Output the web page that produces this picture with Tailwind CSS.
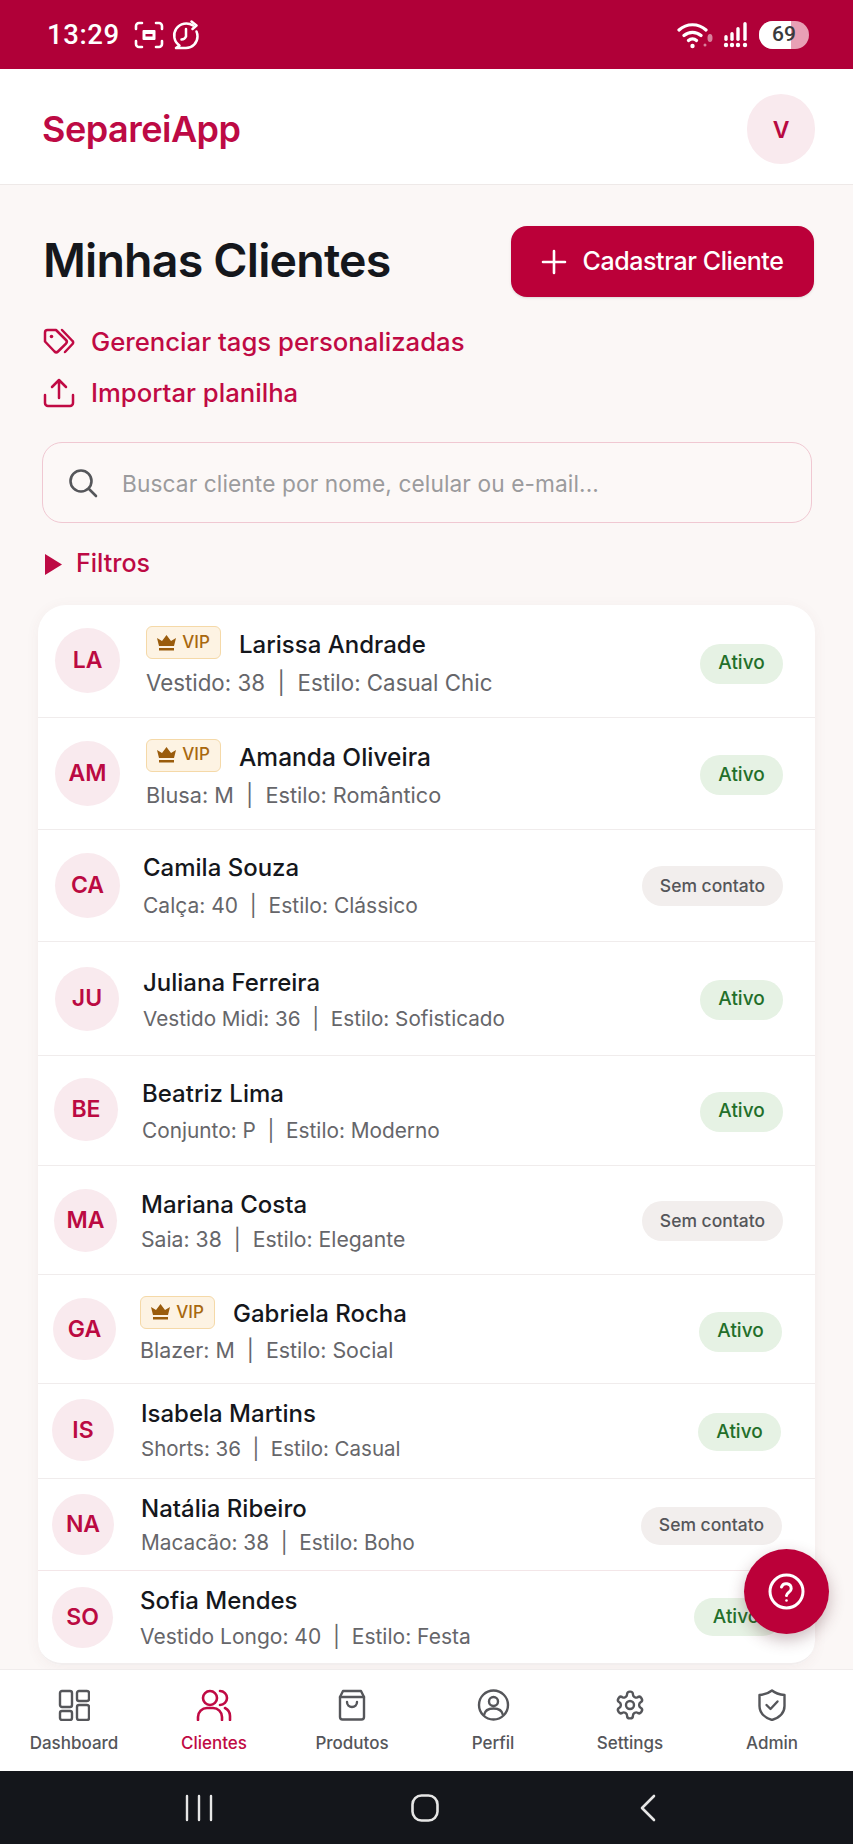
<!DOCTYPE html>
<html lang="pt-BR">
<head>
<meta charset="utf-8">
<script src="https://cdn.jsdelivr.net/npm/@tailwindcss/browser@4"></script>
</head>
<body class="m-0 bg-[#fbf7f6] font-['Inter',sans-serif]">
<div class="relative w-[853px] h-[1844px] overflow-hidden flex flex-col">
  <!-- status bar -->
  <div class="h-[69px] shrink-0 bg-[#b00038] flex items-center justify-between pl-[47px] pr-[44px] text-white">
    <div class="flex items-center">
      <span class="text-[27.5px] font-medium font-['Roboto',sans-serif] w-[86px] tracking-[0.6px]">13:29</span>
      <svg class="ml-[1px]" width="30" height="28" viewBox="0 0 30 28" fill="none" stroke="white" stroke-width="2.6" stroke-linecap="round" stroke-linejoin="round"><path d="M2 8V5a3 3 0 0 1 3-3h3M22 2h3a3 3 0 0 1 3 3v3M28 20v3a3 3 0 0 1-3 3h-3M8 26H5a3 3 0 0 1-3-3v-3"/><rect x="8.500" y="9" width="13" height="10" rx="1" fill="white" stroke="none"/><rect x="11.500" y="13" width="7" height="2.500" fill="#b00038" stroke="none"/></svg>
      <svg class="ml-[7px]" width="30" height="30" viewBox="0 0 30 30" fill="none" stroke="white" stroke-width="2.5" stroke-linecap="round" stroke-linejoin="round"><path d="M22 5.500A11.500 11.500 0 1 0 8.500 25.500L5 28h10a11.500 11.500 0 0 0 11.500-11.500 11.500 11.500 0 0 0-1-5"/><path d="M20.500 1.500l5 4-4 3.500"/><path d="M15 9v7.500a5 5 0 0 1-4.500 3"/></svg>
    </div>
    <div class="flex items-center">
      <svg class="mr-[3px]" width="38" height="28" viewBox="0 0 38 28" fill="none" stroke="white" stroke-width="3.200" stroke-linecap="round"><path d="M2 9a20 20 0 0 1 27 0M7 14.500a13 13 0 0 1 17 0M11.500 19.500a6 6 0 0 1 8 0"/><circle cx="15.500" cy="25" r="2.200" fill="white" stroke="none"/><circle cx="28" cy="24" r="1.500" fill="white" fill-opacity=".5" stroke="none"/><ellipse cx="33" cy="17" rx="2.500" ry="4" fill="white" fill-opacity=".5" stroke="none"/></svg>
      <svg class="ml-[4px]" width="28" height="28" viewBox="0 0 26 28" fill="white"><circle cx="3" cy="24" r="2.200"/><circle cx="9" cy="24" r="2.200"/><circle cx="15" cy="24" r="2.200"/><circle cx="22" cy="24" r="2.200"/><rect x="1.300" y="14" width="3.400" height="6" rx="1.700"/><rect x="7.300" y="11" width="3.400" height="9" rx="1.700"/><rect x="13.300" y="6" width="3.400" height="14" rx="1.700"/><rect x="20.300" y="1" width="3.400" height="19" rx="1.700"/></svg>
      <div class="ml-[9px] w-[50px] h-[28px] rounded-full bg-[#e8a0b5] overflow-hidden relative flex items-center justify-center">
        <div class="absolute inset-y-0 left-0 w-[32px] bg-white"></div>
        <span class="relative text-[21px] font-medium font-['Roboto',sans-serif] text-[#3a3a3c]">69</span>
      </div>
    </div>
  </div>

  <!-- header -->
  <header class="h-[116px] shrink-0 bg-white border-b border-[#eee9e8] flex items-center justify-between pl-[42px] pr-[38px] pt-[4px]">
    <span class="text-[36px] font-semibold text-[#bd0a44] tracking-[-0.5px]">SepareiApp</span>
    <div class="w-[68px] h-[70px] rounded-full bg-[#f9eaee] flex items-center justify-center text-[23px] font-semibold text-[#b80a42] pt-[3px]">V</div>
  </header>

  <!-- content -->
  <main class="flex-1 min-h-0 relative">
    <div class="flex items-center justify-between pl-[43px] pr-[39px] pt-[41px]">
      <h1 class="text-[46.5px] leading-[69px] font-semibold text-[#15171c] tracking-[-0.8px] mb-[2px]">Minhas Clientes</h1>
      <button class="w-[303px] h-[71px] rounded-[16px] bg-[#bb0039] text-white flex items-center justify-center gap-[15px] text-[25px] font-medium tracking-[-0.4px] shadow-sm">
        <svg width="26" height="26" viewBox="0 0 26 26" fill="none" stroke="white" stroke-width="2.600" stroke-linecap="round"><path d="M13 2v22M2 13h22"/></svg>
        Cadastrar Cliente
      </button>
    </div>

    <div class="pl-[43px] mt-[30px] flex flex-col gap-[21px] text-[#c00a44] text-[25.7px] font-medium">
      <div class="flex items-center gap-[16px] h-[30px]">
        <svg width="32" height="28" viewBox="0 0 32 28" fill="none" stroke="#c00a44" stroke-width="2.500" stroke-linecap="round" stroke-linejoin="round"><path d="M2 4.500A2.500 2.500 0 0 1 4.500 2h8.500l10 10a2.500 2.500 0 0 1 0 3.500l-8 8a2.500 2.500 0 0 1-3.500 0L2 13.500z"/><path d="M19 2l10.500 11a2 2 0 0 1 0 3L22 24"/><circle cx="8.500" cy="8.500" r="1.800" fill="#c00a44" stroke="none"/></svg>
        <span>Gerenciar tags personalizadas</span>
      </div>
      <div class="flex items-center gap-[16px] h-[30px]">
        <svg width="32" height="30" viewBox="0 0 32 30" fill="none" stroke="#c00a44" stroke-width="2.500" stroke-linecap="round" stroke-linejoin="round"><path d="M2 17v8a3 3 0 0 0 3 3h22a3 3 0 0 0 3-3v-8"/><path d="M16 20V2M9 9l7-7 7 7"/></svg>
        <span>Importar planilha</span>
      </div>
    </div>

    <div class="ml-[42px] mt-[34px] w-[770px] h-[81px] rounded-[20px] border-[1.5px] border-[#f0c8d2] bg-[#fcf8f7] flex items-center pl-[25px]">
      <svg width="30" height="30" viewBox="0 0 30 30" fill="none" stroke="#55565a" stroke-width="2.600" stroke-linecap="round"><circle cx="13" cy="13" r="10.500"/><path d="M21 21l7 7"/></svg>
      <span class="ml-[24px] text-[22.7px] text-[#9b9b9d] tracking-[0.1px] pt-[4px]">Buscar cliente por nome, celular ou e-mail...</span>
    </div>

    <div class="pl-[45px] mt-[26px] h-[30px] flex items-center gap-[14px] text-[25px] font-medium text-[#bd0a44]">
      <svg width="17" height="21" viewBox="0 0 17 21"><path d="M0 0l17 10.500L0 21z" fill="#bd0a44"/></svg>
      <span>Filtros</span>
    </div>

    <!-- list -->
    <section class="ml-[38px] mt-[26px] w-[777px] rounded-t-[28px] rounded-b-[24px] bg-white shadow-[0_2px_14px_rgba(120,60,70,0.06)]">
      <div class="h-[113px] flex items-center pl-[17px] pr-[32px] border-b border-[#f0ecec]">
        <div class="w-[65px] h-[65px] mb-[2px] rounded-full bg-[#f9eaee] flex items-center justify-center text-[23px] font-semibold text-[#bb0a42] shrink-0">LA</div>
        <div class="ml-[26px] flex-1 min-w-0 pt-[5px]">
          <div class="flex items-center gap-[18px] h-[34px]">
            <span class="w-[75px] h-[33px] mb-[4px] rounded-[6px] border-[1.5px] border-[#f5d9a8] bg-[#fdf3e3] flex items-center justify-center gap-[6px] text-[17px] font-medium text-[#a8680f]"><svg width="19" height="16" viewBox="0 0 19 16" fill="#9a5c0c"><path d="M2 11L0 3l5 3 4.500-6L14 6l5-3-2 8z"/><rect x="2" y="13" width="15" height="2.500"/></svg>VIP</span>
            <span class="text-[24px] font-medium text-[#15171c]">Larissa Andrade</span>
          </div>
          <div class="mt-[4px] text-[22.3px] text-[#66666a] whitespace-pre">Vestido: 38  |  Estilo: Casual Chic</div>
        </div>
        <span class="mt-[5px] w-[83px] h-[40px] rounded-full bg-[#e6f2e4] flex items-center justify-center text-[19px] font-medium text-[#236f2a]">Ativo</span>
      </div>
      <div class="h-[112px] flex items-center pl-[17px] pr-[32px] border-b border-[#f0ecec]">
        <div class="w-[65px] h-[65px] rounded-full bg-[#f9eaee] flex items-center justify-center text-[23px] font-semibold text-[#bb0a42] shrink-0">AM</div>
        <div class="ml-[26px] flex-1 min-w-0 pt-[5px]">
          <div class="flex items-center gap-[18px] h-[34px]">
            <span class="w-[75px] h-[33px] mb-[4px] rounded-[6px] border-[1.5px] border-[#f5d9a8] bg-[#fdf3e3] flex items-center justify-center gap-[6px] text-[17px] font-medium text-[#a8680f]"><svg width="19" height="16" viewBox="0 0 19 16" fill="#9a5c0c"><path d="M2 11L0 3l5 3 4.500-6L14 6l5-3-2 8z"/><rect x="2" y="13" width="15" height="2.500"/></svg>VIP</span>
            <span class="text-[24.5px] font-medium text-[#15171c]">Amanda Oliveira</span>
          </div>
          <div class="mt-[5px] text-[21.7px] text-[#66666a] whitespace-pre">Blusa: M  |  Estilo: Romântico</div>
        </div>
        <span class="mt-[3px] w-[83px] h-[40px] rounded-full bg-[#e6f2e4] flex items-center justify-center text-[19px] font-medium text-[#236f2a]">Ativo</span>
      </div>
      <div class="h-[112px] flex items-center pl-[17px] pr-[32px] border-b border-[#f0ecec]">
        <div class="w-[65px] h-[65px] rounded-full bg-[#f9eaee] flex items-center justify-center text-[23px] font-semibold text-[#bb0a42] shrink-0">CA</div>
        <div class="ml-[23px] flex-1 min-w-0 pt-[2px]">
          <div class="text-[24px] font-medium text-[#15171c] h-[34px] leading-[34px]">Camila Souza</div>
          <div class="mt-[5px] text-[21px] text-[#66666a] whitespace-pre">Calça: 40  |  Estilo: Clássico</div>
        </div>
        <span class="mt-[1px] w-[141px] h-[40px] rounded-full bg-[#f2eeed] flex items-center justify-center text-[17.5px] font-medium text-[#55565a]">Sem contato</span>
      </div>
      <div class="h-[114px] flex items-center pl-[17px] pr-[32px] border-b border-[#f0ecec]">
        <div class="w-[64px] h-[64px] rounded-full bg-[#f9eaee] flex items-center justify-center text-[23px] font-semibold text-[#bb0a42] shrink-0">JU</div>
        <div class="ml-[24px] flex-1 min-w-0 pt-[4px]">
          <div class="text-[24px] font-medium text-[#15171c] h-[34px] leading-[34px]">Juliana Ferreira</div>
          <div class="mt-[3px] text-[20.7px] text-[#66666a] whitespace-pre">Vestido Midi: 36  |  Estilo: Sofisticado</div>
        </div>
        <span class="mt-[2px] w-[83px] h-[40px] rounded-full bg-[#e6f2e4] flex items-center justify-center text-[19px] font-medium text-[#236f2a]">Ativo</span>
      </div>
      <div class="h-[110px] flex items-center pl-[16px] pr-[32px] border-b border-[#f0ecec]">
        <div class="w-[64px] h-[63px] mb-[2px] rounded-full bg-[#f9eaee] flex items-center justify-center text-[23px] font-semibold text-[#bb0a42] shrink-0">BE</div>
        <div class="ml-[24px] flex-1 min-w-0 pt-[3px]">
          <div class="text-[24px] font-medium text-[#15171c] h-[34px] leading-[34px]">Beatriz Lima</div>
          <div class="mt-[4px] text-[20.8px] text-[#66666a] whitespace-pre">Conjunto: P  |  Estilo: Moderno</div>
        </div>
        <span class="mt-[2px] w-[83px] h-[40px] rounded-full bg-[#e6f2e4] flex items-center justify-center text-[19px] font-medium text-[#236f2a]">Ativo</span>
      </div>
      <div class="h-[109px] flex items-center pl-[16px] pr-[32px] border-b border-[#f0ecec]">
        <div class="w-[63px] h-[63px] rounded-full bg-[#f9eaee] flex items-center justify-center text-[23px] font-semibold text-[#bb0a42] shrink-0">MA</div>
        <div class="ml-[24px] flex-1 min-w-0 pt-[4px]">
          <div class="text-[24px] font-medium text-[#15171c] h-[34px] leading-[34px]">Mariana Costa</div>
          <div class="mt-[2px] text-[21.2px] text-[#66666a] whitespace-pre">Saia: 38  |  Estilo: Elegante</div>
        </div>
        <span class="mt-[2px] w-[141px] h-[40px] rounded-full bg-[#f2eeed] flex items-center justify-center text-[17.5px] font-medium text-[#55565a]">Sem contato</span>
      </div>
      <div class="h-[109px] flex items-center pl-[15px] pr-[33px] border-b border-[#f0ecec]">
        <div class="w-[63px] h-[62px] rounded-full bg-[#f9eaee] flex items-center justify-center text-[23px] font-semibold text-[#bb0a42] shrink-0">GA</div>
        <div class="ml-[24px] flex-1 min-w-0 pt-[6px]">
          <div class="flex items-center gap-[18px] h-[34px]">
            <span class="w-[75px] h-[33px] mb-[4px] rounded-[6px] border-[1.5px] border-[#f5d9a8] bg-[#fdf3e3] flex items-center justify-center gap-[6px] text-[17px] font-medium text-[#a8680f]"><svg width="19" height="16" viewBox="0 0 19 16" fill="#9a5c0c"><path d="M2 11L0 3l5 3 4.500-6L14 6l5-3-2 8z"/><rect x="2" y="13" width="15" height="2.500"/></svg>VIP</span>
            <span class="text-[24px] font-medium text-[#15171c]">Gabriela Rocha</span>
          </div>
          <div class="mt-[3px] text-[21.4px] text-[#66666a] whitespace-pre">Blazer: M  |  Estilo: Social</div>
        </div>
        <span class="mt-[5px] w-[83px] h-[40px] rounded-full bg-[#e6f2e4] flex items-center justify-center text-[19px] font-medium text-[#236f2a]">Ativo</span>
      </div>
      <div class="h-[95px] flex items-center pl-[14px] pr-[34px] border-b border-[#f0ecec]">
        <div class="w-[62px] h-[62px] mb-[2px] rounded-full bg-[#f9eaee] flex items-center justify-center text-[23px] font-semibold text-[#bb0a42] shrink-0">IS</div>
        <div class="ml-[27px] flex-1 min-w-0">
          <div class="text-[24px] font-medium text-[#15171c] h-[32px] leading-[32px]">Isabela Martins</div>
          <div class="mt-[4px] text-[20.5px] text-[#66666a] whitespace-pre">Shorts: 36  |  Estilo: Casual</div>
        </div>
        <span class="mt-[2px] w-[83px] h-[38px] rounded-full bg-[#e6f2e4] flex items-center justify-center text-[19px] font-medium text-[#236f2a]">Ativo</span>
      </div>
      <div class="h-[92px] flex items-center pl-[14px] pr-[33px] border-b border-[#f3e6e8]">
        <div class="w-[62px] h-[61px] rounded-full bg-[#f9eaee] flex items-center justify-center text-[23px] font-semibold text-[#bb0a42] shrink-0">NA</div>
        <div class="ml-[27px] flex-1 min-w-0 pt-[3px]">
          <div class="text-[24px] font-medium text-[#15171c] h-[32px] leading-[32px]">Natália Ribeiro</div>
          <div class="mt-[2px] text-[20.8px] text-[#66666a] whitespace-pre">Macacão: 38  |  Estilo: Boho</div>
        </div>
        <span class="mt-[2px] w-[141px] h-[38px] rounded-full bg-[#f2eeed] flex items-center justify-center text-[17.5px] font-medium text-[#55565a]">Sem contato</span>
      </div>
      <div class="h-[94px] flex items-center pl-[14px] pr-[34px] rounded-b-[24px] border-b-2 border-[#f2eeee]">
        <div class="w-[61px] h-[61px] rounded-full bg-[#f9eaee] flex items-center justify-center text-[23px] font-semibold text-[#bb0a42] shrink-0">SO</div>
        <div class="ml-[27px] flex-1 min-w-0 pt-[3px]">
          <div class="text-[24px] font-medium text-[#15171c] h-[32px] leading-[32px]">Sofia Mendes</div>
          <div class="mt-[4px] text-[21px] text-[#66666a] whitespace-pre">Vestido Longo: 40  |  Estilo: Festa</div>
        </div>
        <span class="w-[88px] mr-[-1px] h-[38px] rounded-full bg-[#e6f2e4] flex items-center justify-center text-[19px] font-medium text-[#236f2a] pr-[4px]">Ativo</span>
      </div>
    </section>
  </main>

  <!-- bottom nav -->
  <nav class="h-[102px] shrink-0 bg-white border-t border-[#f0ecec] flex text-[17px] font-medium text-[#55565a] relative">
    <div class="w-[148px] flex flex-col items-center pt-[19px] gap-[10px]">
      <svg width="32" height="32" viewBox="0 0 32 32" fill="none" stroke="#55565a" stroke-width="2.400" stroke-linejoin="round"><rect x="2" y="2" width="12" height="16" rx="2"/><rect x="19" y="2" width="12" height="10" rx="2"/><rect x="2" y="22" width="12" height="9" rx="2"/><rect x="19" y="16" width="12" height="15" rx="2"/></svg>
      <span>Dashboard</span>
    </div>
    <div class="w-[132px] flex flex-col items-center pt-[19px] gap-[10px] text-[#c00a44]">
      <svg width="36" height="32" viewBox="0 0 36 32" fill="none" stroke="#c00a44" stroke-width="2.600" stroke-linecap="round"><circle cx="14" cy="9" r="7"/><path d="M2 31v-3a9 9 0 0 1 9-9h6a9 9 0 0 1 9 9v3"/><path d="M24 2a7 7 0 0 1 0 14M29 19a9 9 0 0 1 5 8v4"/></svg>
      <span>Clientes</span>
    </div>
    <div class="w-[144px] flex flex-col items-center pt-[19px] gap-[10px]">
      <svg width="32" height="32" viewBox="0 0 32 32" fill="none" stroke="#55565a" stroke-width="2.400" stroke-linecap="round" stroke-linejoin="round"><path d="M7 2h18l3 6v20a2.500 2.500 0 0 1-2.500 2.500h-19A2.500 2.500 0 0 1 4 28V8z"/><path d="M4 8h24M11 13a5 5 0 0 0 10 0"/></svg>
      <span>Produtos</span>
    </div>
    <div class="w-[138px] flex flex-col items-center pt-[19px] gap-[10px]">
      <svg width="33" height="32" viewBox="0 0 33 32" fill="none" stroke="#55565a" stroke-width="2.400"><circle cx="16.500" cy="16" r="14.500"/><circle cx="16.500" cy="12.500" r="4.500"/><path d="M7 26c1-5 5-6.500 9.500-6.500S25 21 26 26"/></svg>
      <span>Perfil</span>
    </div>
    <div class="w-[136px] flex flex-col items-center pt-[19px] gap-[10px]">
      <svg width="34" height="32" viewBox="0 0 24 24" fill="none" stroke="#55565a" stroke-width="1.800" stroke-linecap="round" stroke-linejoin="round"><path d="M12.220 2h-.440a2 2 0 0 0-2 2v.180a2 2 0 0 1-1 1.730l-.430.250a2 2 0 0 1-2 0l-.150-.080a2 2 0 0 0-2.730.730l-.220.380a2 2 0 0 0 .730 2.730l.150.100a2 2 0 0 1 1 1.720v.510a2 2 0 0 1-1 1.740l-.150.090a2 2 0 0 0-.730 2.730l.220.380a2 2 0 0 0 2.730.730l.150-.080a2 2 0 0 1 2 0l.430.250a2 2 0 0 1 1 1.730V20a2 2 0 0 0 2 2h.440a2 2 0 0 0 2-2v-.180a2 2 0 0 1 1-1.730l.430-.250a2 2 0 0 1 2 0l.150.080a2 2 0 0 0 2.730-.730l.220-.390a2 2 0 0 0-.730-2.730l-.150-.080a2 2 0 0 1-1-1.740v-.500a2 2 0 0 1 1-1.740l.150-.090a2 2 0 0 0 .730-2.730l-.220-.380a2 2 0 0 0-2.730-.730l-.150.080a2 2 0 0 1-2 0l-.430-.250a2 2 0 0 1-1-1.730V4a2 2 0 0 0-2-2z"/><circle cx="12" cy="12" r="3"/></svg>
      <span>Settings</span>
    </div>
    <div class="w-[148px] flex flex-col items-center pt-[19px] gap-[10px]">
      <svg width="30" height="32" viewBox="0 0 30 32" fill="none" stroke="#55565a" stroke-width="2.400" stroke-linecap="round" stroke-linejoin="round"><path d="M15 1.500c3 2.500 7 4 12.500 4.500v11c0 7-5 11.500-12.500 14C7.500 28.500 2.500 24 2.500 17V6C8 5.500 12 4 15 1.500z"/><path d="M9.500 16l4 4 7-7.500"/></svg>
      <span>Admin</span>
    </div>
  </nav>

  <!-- android nav -->
  <div class="h-[73px] shrink-0 bg-[#14161b] flex items-center relative">
    <svg class="ml-[185px]" width="28" height="28" viewBox="0 0 28 28" stroke="#e6e6e6" stroke-width="2.400" stroke-linecap="round"><path d="M2 2v24M14 2v24M26 2v24"/></svg>
    <svg class="ml-[198px]" width="28" height="28" viewBox="0 0 28 28" fill="none" stroke="#e6e6e6" stroke-width="2.600"><rect x="1.500" y="1.500" width="25" height="25" rx="9"/></svg>
    <svg class="ml-[200px]" width="18" height="28" viewBox="0 0 18 28" fill="none" stroke="#e6e6e6" stroke-width="2.600" stroke-linecap="round" stroke-linejoin="round"><path d="M15 2L3 14l12 12"/></svg>
  </div>

  <!-- floating help -->
  <button class="absolute left-[744px] top-[1549px] w-[85px] h-[85px] rounded-full bg-[#bb0039] flex items-center justify-center shadow-[0_6px_16px_rgba(80,30,40,0.3)]">
    <svg width="37" height="37" viewBox="0 0 37 37" fill="none" stroke="white" stroke-width="3" stroke-linecap="round" stroke-linejoin="round"><circle cx="18.500" cy="18.500" r="16.500"/><path d="M13.500 14a5 5 0 0 1 9.700 1.700c0 3.300-4.700 4-4.700 6.800"/><circle cx="18.500" cy="27.500" r="1.300" fill="white" stroke="none"/></svg>
  </button>
</div>
</body>
</html>
